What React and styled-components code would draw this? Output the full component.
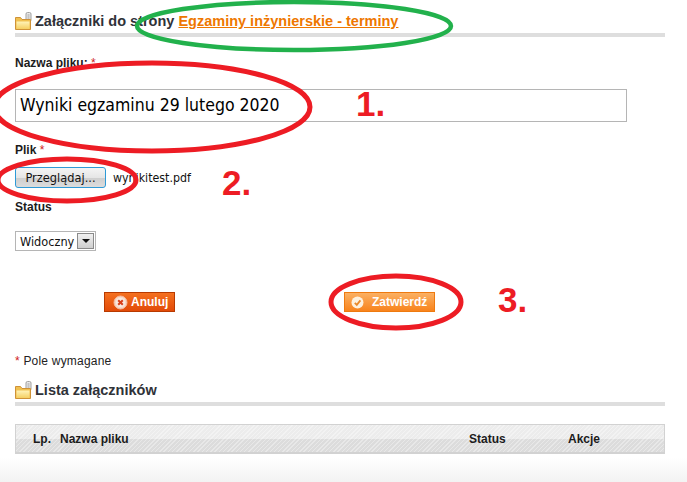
import React from 'react';
import styled, { createGlobalStyle } from 'styled-components';

const GlobalStyle = createGlobalStyle`
  html, body {
    margin: 0;
    padding: 0;
    background: #fff;
  }
  body {
    font-family: "Liberation Sans", Arial, sans-serif;
    font-size: 12px;
    color: #222;
    overflow: hidden;
  }
`;

const Page = styled.div`
  position: relative;
  width: 687px;
  height: 482px;
  overflow: hidden;
  background: linear-gradient(to bottom, #fff 0, #fff 458px, #f3f3f3 482px);
`;

const Content = styled.div`
  display: flex;
  flex-direction: column;
  padding: 0 22px 0 15px;
`;

const Heading = styled.div`
  display: flex;
  align-items: center;
  gap: 1px;
  height: ${(p) => p.$height}px;
  margin-top: ${(p) => p.$top || 0}px;
  border-bottom: 4px solid #dedede;
  padding-bottom: 3px;
  box-sizing: content-box;
  font-size: 14.5px;
  font-weight: bold;
  color: #2f3238;
`;

const HeadingText = styled.span`
  white-space: pre;
`;

const HeadingLink = styled.a`
  color: #ee7700;
  text-decoration: underline;
  margin-left: 3px;
`;

const Label = styled.div`
  font-size: 12px;
  font-weight: bold;
  line-height: 14px;
  color: #1c1c1c;
  margin-top: ${(p) => p.$top}px;
`;

const Star = styled.span`
  color: #d02020;
  font-weight: normal;
`;

const TextField = styled.div`
  box-sizing: border-box;
  width: 612px;
  height: 33px;
  margin-top: 19px;
  padding-left: 4px;
  border: 1px solid #b5b5b5;
  font-family: "DejaVu Sans", sans-serif;
  font-stretch: condensed;
  font-size: 17.5px;
  line-height: 31px;
  color: #000;
`;

const FileRow = styled.div`
  display: flex;
  align-items: center;
  gap: 7px;
  margin-top: 10px;
  font-family: "DejaVu Sans", sans-serif;
  font-stretch: condensed;
  font-size: 12.3px;
  color: #111;
`;

const BrowseButton = styled.button`
  box-sizing: border-box;
  width: 91px;
  height: 21px;
  padding: 0;
  border: 1px solid #2f9ad6;
  border-radius: 3px;
  background: linear-gradient(to bottom, #f4f4f4 0, #e6e6e6 50%, #cfcfcf 55%, #dcdcdc 100%);
  font-family: "DejaVu Sans", sans-serif;
  font-stretch: condensed;
  font-size: 12.7px;
  color: #111;
`;

const Select = styled.div`
  box-sizing: border-box;
  display: flex;
  align-items: center;
  justify-content: space-between;
  width: 81px;
  height: 20px;
  margin-top: 17px;
  padding: 1px 1px 1px 4px;
  border: 1px solid #b5b5b5;
  font-family: "DejaVu Sans", sans-serif;
  font-stretch: condensed;
  font-size: 12.6px;
  color: #111;
`;

const SelectArrow = styled.span`
  box-sizing: border-box;
  display: flex;
  align-items: center;
  justify-content: center;
  width: 17px;
  height: 16px;
  border: 1px solid #8a8a8a;
  background: linear-gradient(to bottom, #f0f0f0, #cfcfcf);

  &::after {
    content: '';
    border-left: 4px solid transparent;
    border-right: 4px solid transparent;
    border-top: 4px solid #111;
  }
`;

const ButtonRow = styled.div`
  display: flex;
  gap: 169px;
  margin-top: 41px;
  margin-left: 89px;
`;

const ActionButton = styled.div`
  box-sizing: border-box;
  display: flex;
  align-items: center;
  gap: ${(p) => p.$gap}px;
  width: ${(p) => p.$width}px;
  height: 20px;
  padding-left: ${(p) => p.$pad}px;
  border: 1px solid ${(p) => p.$border};
  background: linear-gradient(to bottom, ${(p) => p.$from}, ${(p) => p.$to});
  font-size: 12px;
  font-weight: bold;
  color: #fff;
`;

const Note = styled.div`
  margin-top: 42px;
  font-size: 12px;
  letter-spacing: 0.2px;
  line-height: 14px;
  color: #222;
`;

const Table = styled.div`
  display: grid;
  grid-template-columns: 27px 409px 99px 1fr;
  align-items: center;
  box-sizing: border-box;
  height: 30px;
  margin-top: 18px;
  border: 1px solid #d2d2d2;
  border-bottom-width: 2px;
  padding-left: 17px;
  background:
    repeating-linear-gradient(135deg, rgba(255, 255, 255, 0.35) 0 1px, transparent 1px 3px),
    linear-gradient(to bottom, #ececec 0, #ececec 50%, #dcdcdc 50%, #dcdcdc 100%);
  font-size: 12px;
  font-weight: bold;
  color: #1c1c1c;
`;

const TableCell = styled.span`
  white-space: nowrap;
`;

const Overlay = styled.svg`
  position: absolute;
  left: 0;
  top: 0;
  width: 687px;
  height: 482px;
  pointer-events: none;
`;

const Number = styled.span`
  position: absolute;
  left: ${(p) => p.$x}px;
  top: ${(p) => p.$y}px;
  font-size: 35px;
  font-weight: bold;
  line-height: 36px;
  color: #ed1c24;
`;

const FolderIcon = () => (
  <svg width="19" height="18" viewBox="0 0 19 18">
    <defs>
      <linearGradient id="folderFill" x1="0" y1="0" x2="0" y2="1">
        <stop offset="0" stopColor="#fff3b8" />
        <stop offset="1" stopColor="#f5cf62" />
      </linearGradient>
    </defs>
    <rect x="11" y="0.5" width="5" height="9" rx="1.5" fill="#e8e8e8" stroke="#a0a0a0" />
    <rect x="12.5" y="2" width="2" height="5" fill="#c4c4c4" />
    <path d="M0.5 5.5h5l1.5 2h8.5v10h-15z" fill="#f0c050" stroke="#cf9238" />
    <path d="M1.5 9.5h13v7.5h-13z" fill="url(#folderFill)" />
  </svg>
);

const CancelIcon = () => (
  <svg width="15" height="15" viewBox="0 0 15 15">
    <circle cx="7.5" cy="7.5" r="6.5" fill="#f6d9c8" stroke="#f7b79a" />
    <circle cx="7.5" cy="7.5" r="4.5" fill="#f9ebe2" />
    <path d="M5.2 5.2l4.6 4.6M9.8 5.2l-4.6 4.6" stroke="#d8401a" strokeWidth="2" />
  </svg>
);

const ConfirmIcon = () => (
  <svg width="13" height="13" viewBox="0 0 13 13">
    <circle cx="6.5" cy="6.5" r="6" fill="#fdf1df" />
    <path d="M3.8 6.8l2 2 3.6-4.4" fill="none" stroke="#e98a2c" strokeWidth="1.8" />
  </svg>
);

export default function App() {
  return (
    <Page>
      <GlobalStyle />
      <Content>
        <Heading $height={18} $top={12}>
          <FolderIcon />
          <HeadingText>Załączniki do strony</HeadingText>
          <HeadingLink>Egzaminy inżynierskie - terminy</HeadingLink>
        </Heading>

        <Label $top={19}>
          Nazwa pliku: <Star>*</Star>
        </Label>
        <TextField>Wyniki egzaminu 29 lutego 2020</TextField>

        <Label $top={21}>
          Plik <Star>*</Star>
        </Label>
        <FileRow>
          <BrowseButton>Przeglądaj...</BrowseButton>
          <span>wynikitest.pdf</span>
        </FileRow>

        <Label $top={12}>Status</Label>
        <Select>
          Widoczny
          <SelectArrow />
        </Select>

        <ButtonRow>
          <ActionButton $width={71} $pad={8} $gap={3} $border="#b83a00" $from="#f4701f" $to="#e24a08">
            <CancelIcon />
            Anuluj
          </ActionButton>
          <ActionButton $width={91} $pad={6} $gap={8} $border="#ee7a10" $from="#fbb063" $to="#f8831c">
            <ConfirmIcon />
            Zatwierdź
          </ActionButton>
        </ButtonRow>

        <Note>
          <Star>*</Star> Pole wymagane
        </Note>

        <Heading $height={18} $top={13}>
          <FolderIcon />
          <HeadingText>Lista załączników</HeadingText>
        </Heading>

        <Table>
          <TableCell>Lp.</TableCell>
          <TableCell>Nazwa pliku</TableCell>
          <TableCell>Status</TableCell>
          <TableCell>Akcje</TableCell>
        </Table>
      </Content>

      <Overlay viewBox="0 0 687 482">
        <ellipse cx="294" cy="26" rx="157" ry="24" fill="none" stroke="#22b14c" strokeWidth="4.5" />
        <ellipse cx="152" cy="107" rx="158" ry="44" fill="none" stroke="#ed1c24" strokeWidth="5" />
        <ellipse cx="67" cy="180" rx="69" ry="21" fill="none" stroke="#ed1c24" strokeWidth="5" />
        <ellipse cx="396" cy="302" rx="65" ry="26" fill="none" stroke="#ed1c24" strokeWidth="5" />
      </Overlay>
      <Number $x={356} $y={86}>1.</Number>
      <Number $x={222} $y={165}>2.</Number>
      <Number $x={498} $y={282}>3.</Number>
    </Page>
  );
}
